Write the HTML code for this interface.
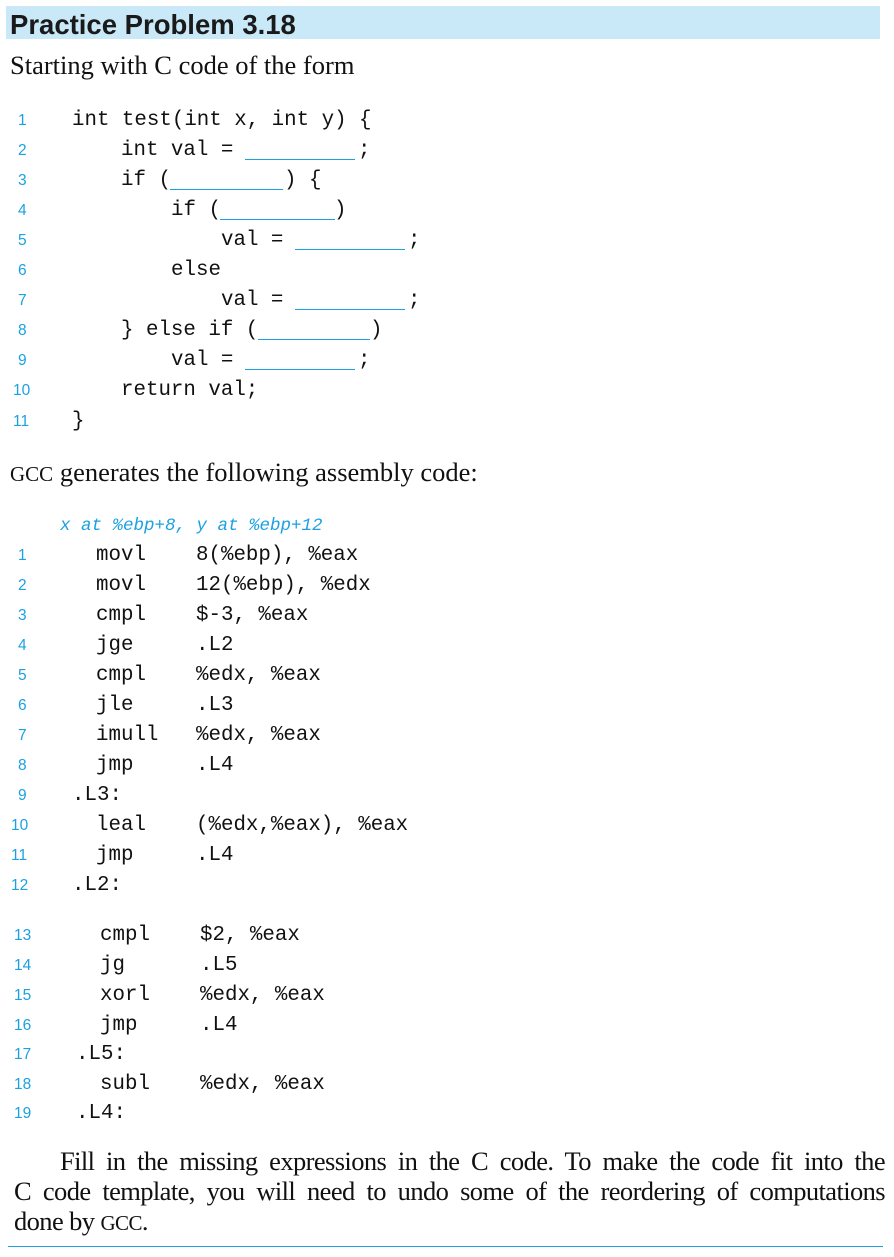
<!DOCTYPE html>
<html><head><meta charset="utf-8"><style>
html,body{margin:0;padding:0;background:#fff;width:894px;height:1257px;overflow:hidden;position:relative}
div{position:absolute;white-space:pre;line-height:30px;height:30px}
.m{font-family:"Liberation Mono",monospace;font-size:20.8px;color:#111}
.n{font-family:"Liberation Sans",sans-serif;font-size:15.5px;color:#1ba1e2}
.s{font-family:"Liberation Serif",serif;font-size:26.5px;color:#111}
.b{height:0;border-bottom:1.3px solid #1ba1e2}
.w{margin-top:3px}
</style></head><body>
<div style="left:6px;top:6px;width:874px;height:33px;background:#c9e9f8"></div>
<div style="left:10px;top:7px;font-family:'Liberation Sans',sans-serif;font-weight:bold;font-size:27.5px;color:#1a1a1a;line-height:35px">Practice Problem 3.18</div>
<div class="s" style="left:10px;top:50px">Starting with C code of the form</div>
<div style="left:0;top:3px;width:894px;height:1100px">
<div class="n" style="left:18px;top:103px">1</div><div class="m" style="left:72px;top:103px">int test(int x, int y) {</div>
<div class="n" style="left:18px;top:133px">2</div><div class="m" style="left:121px;top:133px">int val =</div><div class="b" style="left:245px;top:156px;width:110px"></div><div class="m" style="left:358px;top:133px">;</div>
<div class="n" style="left:18px;top:163px">3</div><div class="m" style="left:121px;top:163px">if (</div><div class="b" style="left:170px;top:186px;width:113px"></div><div class="m" style="left:284px;top:163px">) {</div>
<div class="n" style="left:18px;top:193px">4</div><div class="m" style="left:171px;top:193px">if (</div><div class="b" style="left:220px;top:216px;width:115px"></div><div class="m" style="left:334px;top:193px">)</div>
<div class="n" style="left:18px;top:223px">5</div><div class="m" style="left:221px;top:223px">val =</div><div class="b" style="left:295px;top:246px;width:110px"></div><div class="m" style="left:408px;top:223px">;</div>
<div class="n" style="left:18px;top:253px">6</div><div class="m" style="left:171px;top:253px">else</div>
<div class="n" style="left:18px;top:283px">7</div><div class="m" style="left:221px;top:283px">val =</div><div class="b" style="left:295px;top:306px;width:110px"></div><div class="m" style="left:408px;top:283px">;</div>
<div class="n" style="left:18px;top:313px">8</div><div class="m" style="left:121px;top:313px">} else if (</div><div class="b" style="left:258px;top:336px;width:112px"></div><div class="m" style="left:370px;top:313px">)</div>
<div class="n" style="left:18px;top:343px">9</div><div class="m" style="left:171px;top:343px">val =</div><div class="b" style="left:245px;top:366px;width:110px"></div><div class="m" style="left:358px;top:343px">;</div>
<div class="n" style="left:13px;top:373px">10</div><div class="m" style="left:121px;top:373px">return val;</div>
<div class="n" style="left:13px;top:404px">11</div><div class="m" style="left:72px;top:404px">}</div>

<div class="s" style="left:10px;top:454px"><span style="font-size:21px">GCC</span> generates the following assembly code:</div>
<div class="m" style="left:60px;top:508px;font-size:17.5px;font-style:italic;color:#1ba1e2">x at %ebp+8, y at %ebp+12</div>

<div class="n" style="left:18px;top:538px">1</div><div class="m" style="left:96px;top:538px">movl</div><div class="m" style="left:196px;top:538px">8(%ebp), %eax</div>
<div class="n" style="left:18px;top:568px">2</div><div class="m" style="left:96px;top:568px">movl</div><div class="m" style="left:196px;top:568px">12(%ebp), %edx</div>
<div class="n" style="left:18px;top:598px">3</div><div class="m" style="left:96px;top:598px">cmpl</div><div class="m" style="left:196px;top:598px">$-3, %eax</div>
<div class="n" style="left:18px;top:628px">4</div><div class="m" style="left:96px;top:628px">jge</div><div class="m" style="left:196px;top:628px">.L2</div>
<div class="n" style="left:18px;top:658px">5</div><div class="m" style="left:96px;top:658px">cmpl</div><div class="m" style="left:196px;top:658px">%edx, %eax</div>
<div class="n" style="left:18px;top:688px">6</div><div class="m" style="left:96px;top:688px">jle</div><div class="m" style="left:196px;top:688px">.L3</div>
<div class="n" style="left:18px;top:718px">7</div><div class="m" style="left:96px;top:718px">imull</div><div class="m" style="left:196px;top:718px">%edx, %eax</div>
<div class="n" style="left:18px;top:748px">8</div><div class="m" style="left:96px;top:748px">jmp</div><div class="m" style="left:196px;top:748px">.L4</div>
<div class="n" style="left:18px;top:778px">9</div><div class="m" style="left:72px;top:778px">.L3:</div>
<div class="n" style="left:11px;top:808px">10</div><div class="m" style="left:96px;top:808px">leal</div><div class="m" style="left:196px;top:808px">(%edx,%eax), %eax</div>
<div class="n" style="left:11px;top:838px">11</div><div class="m" style="left:96px;top:838px">jmp</div><div class="m" style="left:196px;top:838px">.L4</div>
<div class="n" style="left:11px;top:868px">12</div><div class="m" style="left:72px;top:868px">.L2:</div>

<div class="n" style="left:14px;top:918px">13</div><div class="m" style="left:100px;top:918px">cmpl</div><div class="m" style="left:200px;top:918px">$2, %eax</div>
<div class="n" style="left:14px;top:948px">14</div><div class="m" style="left:100px;top:948px">jg</div><div class="m" style="left:200px;top:948px">.L5</div>
<div class="n" style="left:14px;top:978px">15</div><div class="m" style="left:100px;top:978px">xorl</div><div class="m" style="left:200px;top:978px">%edx, %eax</div>
<div class="n" style="left:14px;top:1008px">16</div><div class="m" style="left:100px;top:1008px">jmp</div><div class="m" style="left:200px;top:1008px">.L4</div>
<div class="n" style="left:14px;top:1037px">17</div><div class="m" style="left:76px;top:1037px">.L5:</div>
<div class="n" style="left:14px;top:1067px">18</div><div class="m" style="left:100px;top:1067px">subl</div><div class="m" style="left:200px;top:1067px">%edx, %eax</div>
<div class="n" style="left:14px;top:1096px">19</div><div class="m" style="left:76px;top:1096px">.L4:</div>
</div>
<div class="s" style="left:60px;top:1146px;width:825px;white-space:normal;text-align:justify;text-align-last:justify;letter-spacing:-0.6px">Fill in the missing expressions in the C code. To make the code fit into the</div>
<div class="s" style="left:14px;top:1176px;width:871px;white-space:normal;text-align:justify;text-align-last:justify;letter-spacing:-0.6px">C code template, you will need to undo some of the reordering of computations</div>
<div class="s" style="left:14px;top:1206px;letter-spacing:-0.6px">done by <span style="font-size:21px">GCC</span>.</div>
<div style="left:8px;top:1246px;width:875px;height:0;border-bottom:1.5px solid #1ba1e2"></div>
</body></html>
